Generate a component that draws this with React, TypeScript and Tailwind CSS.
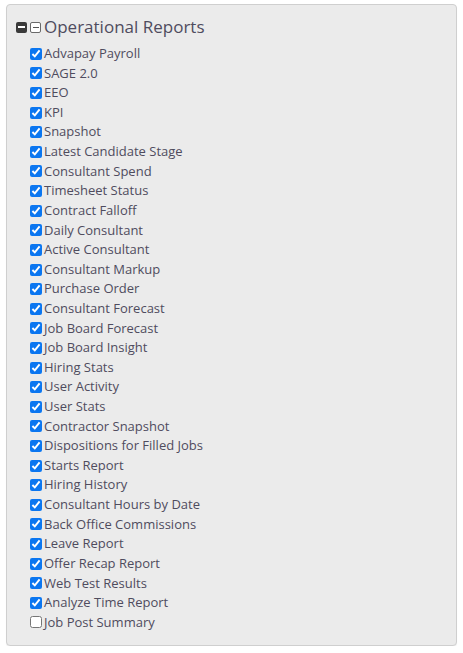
const REPORTS = [
  'Advapay Payroll',
  'SAGE 2.0',
  'EEO',
  'KPI',
  'Snapshot',
  'Latest Candidate Stage',
  'Consultant Spend',
  'Timesheet Status',
  'Contract Falloff',
  'Daily Consultant',
  'Active Consultant',
  'Consultant Markup',
  'Purchase Order',
  'Consultant Forecast',
  'Job Board Forecast',
  'Job Board Insight',
  'Hiring Stats',
  'User Activity',
  'User Stats',
  'Contractor Snapshot',
  'Dispositions for Filled Jobs',
  'Starts Report',
  'Hiring History',
  'Consultant Hours by Date',
  'Back Office Commissions',
  'Leave Report',
  'Offer Recap Report',
  'Web Test Results',
  'Analyze Time Report',
  'Job Post Summary',
]

export default function App() {
  return (
    <div className="pl-[6px] pt-[4px] font-['Open_Sans',sans-serif] text-[#4f4c5e]">
      <div className="w-[451px] h-[642px] rounded-[4px] border border-[#cfcfcf] bg-[#ebebeb] pl-[9px] pt-[9px] shadow-[0_1px_1px_rgba(0,0,0,0.06)]">
        <div className="flex items-center gap-[2px]">
          <span className="flex h-[11px] w-[11px] items-center justify-center rounded-[2px] bg-[#3a3a3a]">
            <span className="h-[2px] w-[7px] bg-white" />
          </span>
          <span className="ml-[1px] flex h-[11px] w-[11px] items-center justify-center rounded-[2px] border border-[#6a6a6a] bg-white">
            <span className="h-[1px] w-[6px] bg-[#555]" />
          </span>
          <span className="ml-[1px] text-[17px] leading-[26px]">Operational Reports</span>
        </div>
        <ul className="mt-[4px] pl-[14px]">
          {REPORTS.map((name, index) => (
            <li key={name} className="flex h-[19.62px] items-center text-[13px]">
              <input
                type="checkbox"
                defaultChecked={index < REPORTS.length - 1}
                className="m-0 h-[12px] w-[12px] accent-[#0b76f0]"
              />
              <span className="ml-[2px]">{name}</span>
            </li>
          ))}
        </ul>
      </div>
    </div>
  )
}
